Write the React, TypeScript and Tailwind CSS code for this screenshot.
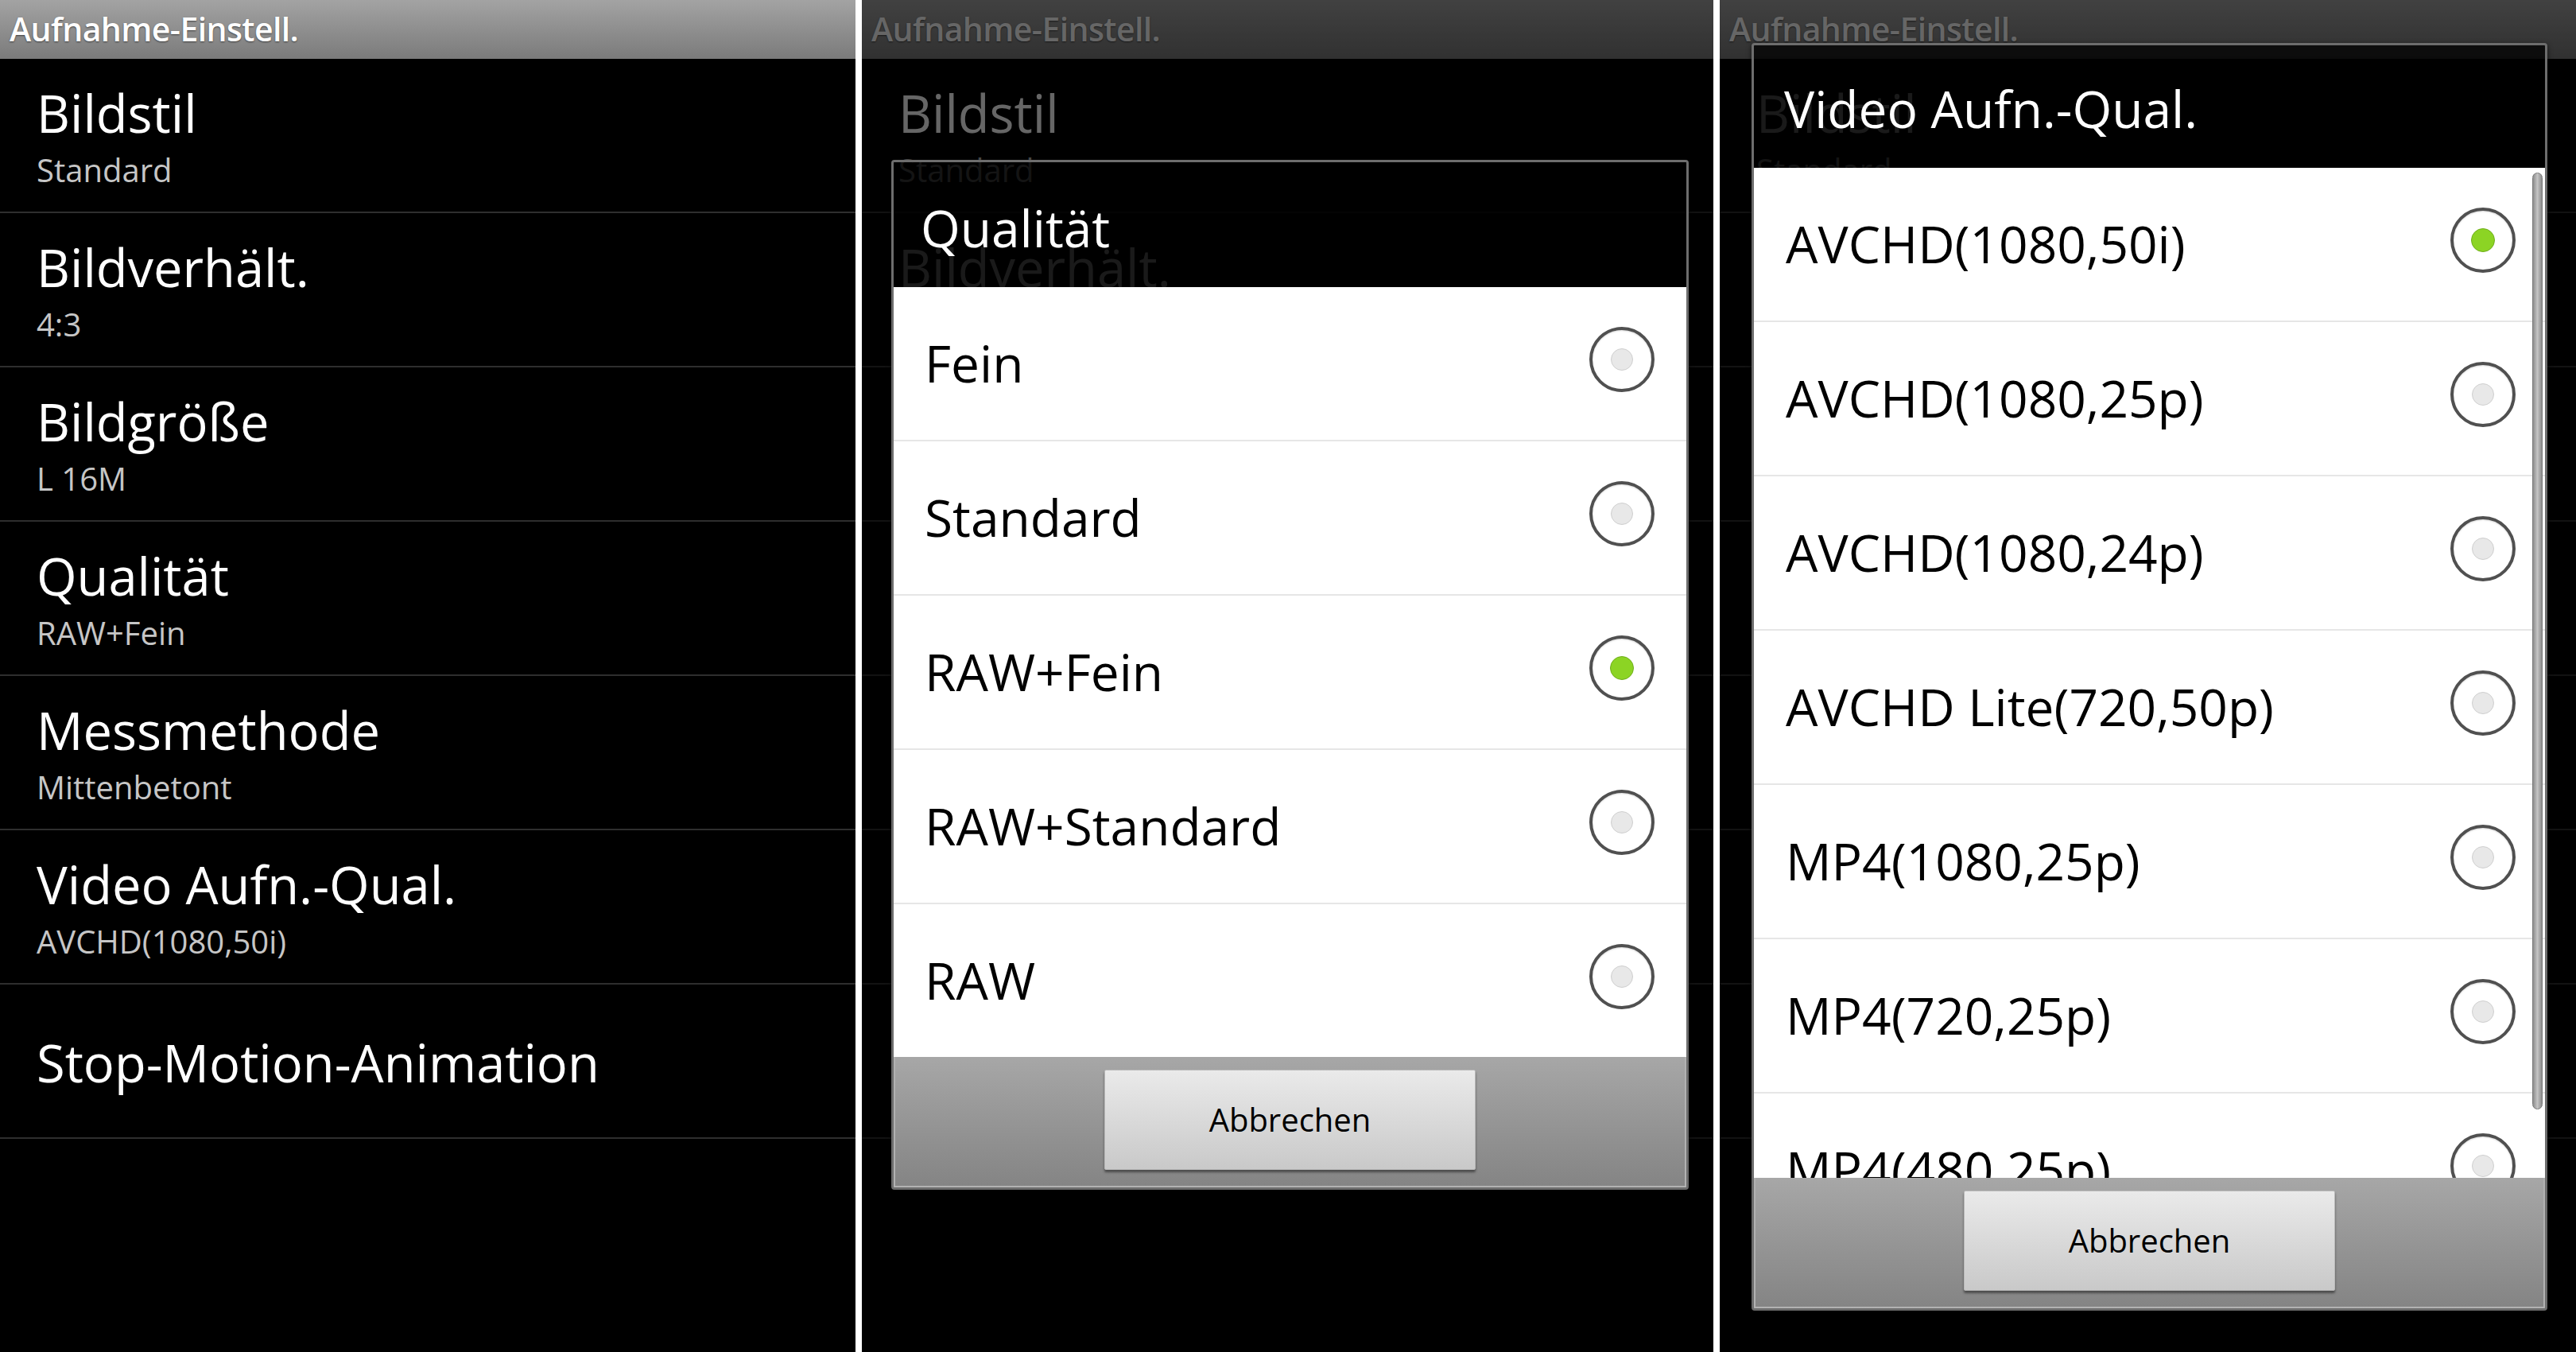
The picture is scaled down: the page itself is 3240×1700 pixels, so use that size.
import React from "react";

type Setting = { title: string; value?: string };

const settings: Setting[] = [
  { title: "Bildstil", value: "Standard" },
  { title: "Bildverhält.", value: "4:3" },
  { title: "Bildgröße", value: "L 16M" },
  { title: "Qualität", value: "RAW+Fein" },
  { title: "Messmethode", value: "Mittenbetont" },
  { title: "Video Aufn.-Qual.", value: "AVCHD(1080,50i)" },
  { title: "Stop-Motion-Animation" },
];

const qualityOptions = ["Fein", "Standard", "RAW+Fein", "RAW+Standard", "RAW"];

const videoOptions = [
  "AVCHD(1080,50i)",
  "AVCHD(1080,25p)",
  "AVCHD(1080,24p)",
  "AVCHD Lite(720,50p)",
  "MP4(1080,25p)",
  "MP4(720,25p)",
  "MP4(480,25p)",
];

const SettingsList = () => {
  return (
    <div>
      <div className="h-[74px] bg-linear-to-b from-[#a3a3a3] to-[#7b7b7b] pl-[12px] pt-[15px]">
        <div className="text-[41px] leading-[42px] font-semibold tracking-[-0.6px] text-white [text-shadow:0_1px_2px_rgba(0,0,0,0.55)]">
          Aufnahme-Einstell.
        </div>
      </div>
      {settings.map((item) => (
        <div
          key={item.title}
          className="h-[194px] border-b-2 border-[#2e2e2e] pl-[46px] pt-[4px] flex flex-col justify-center"
        >
          <div className="text-[65px] leading-[64px] text-white">{item.title}</div>
          {item.value && (
            <div className="mt-[20px] text-[40px] leading-[40px] text-[#c6c6c6]">
              {item.value}
            </div>
          )}
        </div>
      ))}
    </div>
  );
};

const Radio = ({ checked }: { checked?: boolean }) => (
  <div className="w-[82px] h-[82px] mb-[10px] rounded-full border-[4px] border-[#505050] bg-white flex items-center justify-center shadow-[inset_0_1px_2px_rgba(0,0,0,0.15)]">
    {checked ? (
      <div className="w-[30px] h-[30px] rounded-full bg-[#8cd424] border border-[#6fae1c]" />
    ) : (
      <div className="w-[28px] h-[28px] rounded-full bg-[#e8e8e8] border border-[#cfcfcf]" />
    )}
  </div>
);

const CancelBar = () => (
  <div className="flex justify-center pt-[16px] pb-[22px] bg-linear-to-b from-[#a7a7a7] to-[#848484] shadow-[inset_2px_0_0_#b2b2b2,inset_-2px_0_0_#b2b2b2,inset_0_-2px_0_#b2b2b2]">
    <button className="w-[467px] h-[126px] bg-linear-to-b from-[#eaeaea] to-[#c9c9c9] border border-[#b9b9b9] rounded-[2px] shadow-[0_3px_3px_rgba(0,0,0,0.45)] text-[40px] text-black">
      Abbrechen
    </button>
  </div>
);

const DimmedBackdrop = () => (
  <>
    <SettingsList />
    <div className="absolute inset-0 bg-black/60" />
  </>
);

const App = () => {
  return (
    <div className="w-[3240px] h-[1700px] bg-black flex font-['Open_Sans',sans-serif] overflow-hidden">
      <div className="w-[1076px] h-full shrink-0">
        <SettingsList />
      </div>
      <div className="w-[8px] h-full shrink-0 bg-white" />

      <div className="relative w-[1071px] h-full shrink-0">
        <DimmedBackdrop />
        <div className="absolute left-[37px] top-[201px] w-[1003px] border-[3px] border-[#6d6d6d] rounded-[4px] overflow-hidden shadow-[0_2px_6px_rgba(0,0,0,0.6)]">
          <div className="h-[157px] bg-black/[0.74] pl-[34px] pt-[51px]">
            <div className="text-[64px] leading-[64px] text-white">Qualität</div>
          </div>
          <div className="bg-white">
            {qualityOptions.map((opt, i) => (
              <div
                key={opt}
                className={
                  i < qualityOptions.length - 1
                    ? "h-[194px] border-b-2 border-[#e6e6e6] pl-[39px] pr-[40px] flex items-center justify-between"
                    : "h-[192px] pl-[39px] pr-[40px] flex items-center justify-between"
                }
              >
                <span className="text-[64px] leading-[64px] text-black">{opt}</span>
                <Radio checked={opt === "RAW+Fein"} />
              </div>
            ))}
          </div>
          <CancelBar />
        </div>
      </div>
      <div className="w-[8px] h-full shrink-0 bg-white" />

      <div className="relative w-[1077px] h-full shrink-0">
        <DimmedBackdrop />
        <div className="absolute left-[40px] top-[54px] w-[1001px] border-[3px] border-[#6d6d6d] rounded-[4px] overflow-hidden shadow-[0_2px_6px_rgba(0,0,0,0.6)]">
          <div className="h-[154px] bg-black/[0.74] pl-[38px] pt-[48px]">
            <div className="text-[64px] leading-[64px] text-white">Video Aufn.-Qual.</div>
          </div>
          <div className="relative h-[1270px] bg-white overflow-hidden">
            {videoOptions.map((opt) => (
              <div
                key={opt}
                className="h-[194px] border-b-2 border-[#e6e6e6] pl-[40px] pr-[37px] flex items-center justify-between"
              >
                <span className="text-[64px] leading-[64px] text-black">{opt}</span>
                <Radio checked={opt === "AVCHD(1080,50i)"} />
              </div>
            ))}
            <div className="absolute right-[3px] top-[6px] w-[13px] h-[1178px] rounded-full bg-linear-to-r from-[#8e8e8e] via-[#c4c4c4] to-[#8e8e8e] border border-[#7a7a7a]" />
          </div>
          <CancelBar />
        </div>
      </div>
    </div>
  );
};

export default App;
